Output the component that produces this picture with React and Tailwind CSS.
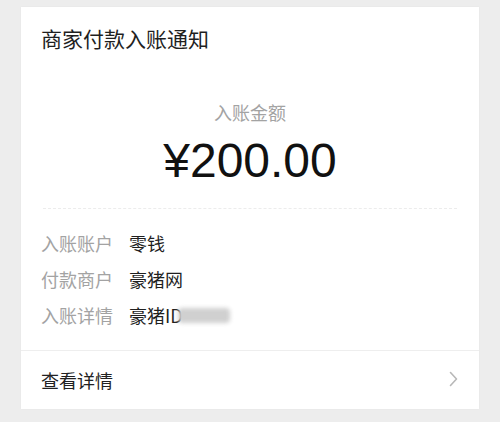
const rows = [
  { label: "入账账户", value: "零钱" },
  { label: "付款商户", value: "豪猪网" },
  { label: "入账详情", value: "豪猪ID", blur: true },
];

const Row = ({ label, value, blur }) => (
  <div className="flex items-center h-9 text-[18px]">
    <span className="w-[88px] text-[#a3a3a3]">{label}</span>
    <span className="text-[#1f1f1f] flex items-center">
      {value}
      {blur && (
        <span className="-ml-[5px] inline-block w-[52px] h-[15px] bg-[#d0d0d0] blur-[2px] rounded-sm" />
      )}
    </span>
  </div>
);

export default function App() {
  return (
    <div
      className="w-[500px] h-[422px] bg-[#ededed] px-[21px] pt-[7px]"
      style={{ fontFamily: '"Noto Sans CJK SC", "Noto Sans", sans-serif' }}
    >
      <div className="bg-white h-[402px] flex flex-col shadow-[0_0_2px_rgba(0,0,0,0.04)]">
        <div className="px-5 pt-[17px] text-[21px] leading-7 text-[#1f1f1f]">商家付款入账通知</div>

        <div className="mt-[48px] text-center text-[18px] leading-6 text-[#a3a3a3]">入账金额</div>
        <div className="mt-[9px] text-center text-[48px] leading-[56px] text-[#111] font-['Liberation_Sans',sans-serif]">
          ¥200.00
        </div>

        <div className="mx-[22px] mt-[19px] border-t border-dashed border-[#ececec]" />

        <div className="px-5 pt-[16px] flex flex-col">
          {rows.map((r) => (
            <Row key={r.label} {...r} />
          ))}
        </div>

        <div className="mt-auto border-t border-[#eeeeee] h-[59px] pl-5 pr-[21px] flex items-center justify-between">
          <span className="text-[18px] text-[#222]">查看详情</span>
          <svg width="9" height="16" viewBox="0 0 9 16" fill="none" className="-mt-[2px]">
            <polyline points="1.5,1.5 7.5,8 1.5,14.5" stroke="#b8b8b8" strokeWidth="1.6" strokeLinecap="round" strokeLinejoin="round" />
          </svg>
        </div>
      </div>
    </div>
  );
}
